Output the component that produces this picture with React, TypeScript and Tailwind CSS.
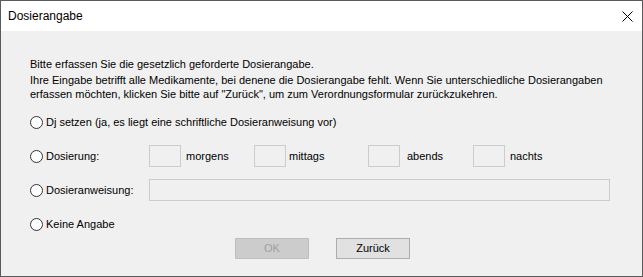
import React from 'react';

const font = { fontFamily: '"Liberation Sans", Arial, sans-serif' };

const Radio: React.FC<{ label: string; className?: string }> = ({ label, className }) => (
  <label className={`flex items-center gap-[3px] ${className ?? ''}`}>
    <span className="w-[13px] h-[13px] rounded-full border border-[#333333] bg-white shrink-0" />
    <span>{label}</span>
  </label>
);

const Box: React.FC<{ className?: string }> = ({ className }) => (
  <div className={`h-[22px] border border-[#cccccc] bg-[#f0f0f0] shrink-0 ${className ?? ''}`} />
);

export default function App() {
  return (
    <div
      className="w-[643px] h-[277px] flex flex-col border border-[#5a5a5a] bg-[#f0f0f0] text-[11px] leading-[15px] text-black overflow-hidden"
      style={font}
    >
      {/* title bar */}
      <div className="h-[30px] bg-white flex items-center justify-between pl-[7px] pr-[8px] shrink-0">
        <span className="text-[12px] leading-none">Dosierangabe</span>
        <svg width="11" height="11" viewBox="0 0 11 11" className="mr-[1px]">
          <path d="M0.5 0.5 L10.5 10.5 M10.5 0.5 L0.5 10.5" stroke="#000" strokeWidth="1" fill="none" />
        </svg>
      </div>

      <div className="flex-1 flex flex-col pl-[29px] pt-[26px]">
        <p className="leading-[14px]">Bitte erfassen Sie die gesetzlich geforderte Dosierangabe.</p>
        <p className="leading-[14px] mt-[2px] whitespace-nowrap">
          Ihre Eingabe betrifft alle Medikamente, bei denene die Dosierangabe fehlt. Wenn Sie unterschiedliche Dosierangaben
          <br />
          erfassen möchten, klicken Sie bitte auf "Zurück", um zum Verordnungsformular zurückzukehren.
        </p>

        <Radio label="Dj setzen (ja, es liegt eine schriftliche Dosieranweisung vor)" className="mt-[13px] h-[16px]" />

        <div className="flex items-center mt-[15px] h-[22px]">
          <Radio label="Dosierung:" className="w-[119px]" />
          <Box className="w-[32px]" />
          <span className="ml-[5px] w-[68px]">morgens</span>
          <Box className="w-[32px]" />
          <span className="ml-[3px] w-[79px]">mittags</span>
          <Box className="w-[32px]" />
          <span className="ml-[7px] w-[66px]">abends</span>
          <Box className="w-[32px]" />
          <span className="ml-[5px]">nachts</span>
        </div>

        <div className="flex items-center mt-[12px] h-[22px]">
          <Radio label="Dosieranweisung:" className="w-[119px]" />
          <Box className="w-[461px]" />
        </div>

        <Radio label="Keine Angabe" className="mt-[15px] h-[16px]" />

        <div className="flex mt-[6px] ml-[205px] gap-[27px]">
          <button className="w-[74px] h-[21px] border border-[#bfbfbf] bg-[#cccccc] text-[#a0a0a0] leading-none">
            OK
          </button>
          <button className="w-[74px] h-[21px] border border-[#adadad] bg-[#e1e1e1] text-black leading-none">
            Zurück
          </button>
        </div>
      </div>
    </div>
  );
}
